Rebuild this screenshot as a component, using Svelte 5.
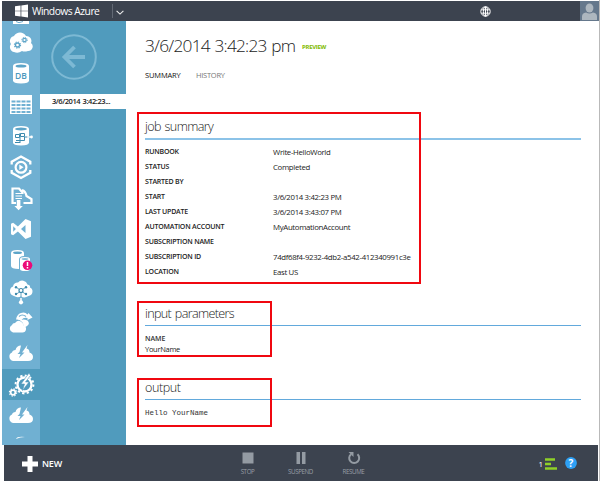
<script>
  const summary = [
    ['RUNBOOK', 'Write-HelloWorld'],
    ['STATUS', 'Completed'],
    ['STARTED BY', ''],
    ['START', '3/6/2014 3:42:23 PM'],
    ['LAST UPDATE', '3/6/2014 3:43:07 PM'],
    ['AUTOMATION ACCOUNT', 'MyAutomationAccount'],
    ['SUBSCRIPTION NAME', ''],
    ['SUBSCRIPTION ID', '74df68f4-9232-4db2-a542-412340991c3e'],
    ['LOCATION', 'East US']
  ];
  const services = ['web', 'cloud', 'db', 'table', 'sync', 'media', 'import', 'vs', 'cache', 'network', 'traffic', 'bolt', 'automation', 'bolt', 'more'];
</script>

<div class="window">
  <header>
    <svg class="logo" viewBox="0 0 14 14"><path d="M0 2l6-.8v5.4H0zM6.8 1.1L14 0v6.6H6.8zM0 7.4h6v5.4L0 12zM6.8 7.4H14V14l-7.2-1.1z" fill="#fff" /></svg>
    <span class="brand">Windows Azure</span>
    <span class="divider"></span>
    <svg class="chev" viewBox="0 0 8 5"><path d="M.6.8L4 4.1 7.4.8" fill="none" stroke="#eee" stroke-width="1.1" /></svg>
    <span class="grow"></span>
    <svg class="globe" viewBox="0 0 11 11"><g fill="none" stroke="#fff" stroke-width="1"><circle cx="5.5" cy="5.5" r="4.7" /><ellipse cx="5.5" cy="5.5" rx="2.1" ry="4.7" /><path d="M5.5.8v9.4M1.3 3.8h8.4M1.3 7.2h8.4" /></g></svg>
    <svg class="avatar" viewBox="0 0 19 20"><path fill="#65788c" d="M0 0h19v20H0z" /><ellipse cx="9.5" cy="7" rx="3.9" ry="4.5" fill="#adb7bf" /><path d="M2 19v-3.5q0-3.5 4-4 3.5 2 7 0 4 .5 4 4V19z" fill="#adb7bf" /></svg>
  </header>

  <div class="body">
    <nav class="rail">
      {#each services as s}
        <div class="item" class:selected={s === 'automation'}>
          <svg viewBox="0 0 38 31">
            {#if s === 'web'}
              <path d="M11 20h16v7H11z" fill="#fff" /><path d="M14 24.5l3 1.2 4-1.2" stroke="#70b0d2" fill="none" />
            {:else if s === 'cloud'}
              <path d="M12 24a5 5 0 0 1-3-8 5 5 0 0 1 3-8 7 7 0 0 1 12 0 5 5 0 0 1 5 7 4.5 4.5 0 0 1-3 8q-4 1-6 0-4 3-8 1z" fill="#fff" />
              <g fill="none" stroke="#5ca4c8"><circle cx="15.500" cy="17" r="2" stroke-width="1.300" /><circle cx="15.500" cy="17" r="3.100" stroke-width="1.100" stroke-dasharray="1.220 1.220" /><circle cx="22.500" cy="12" r="1.700" stroke-width="1.200" /><circle cx="22.500" cy="12" r="2.700" stroke-width="1" stroke-dasharray="1.060 1.060" /></g>
            {:else if s === 'db'}
              <path d="M11 7q0-3 8-3t8 3v14.500q0 3-8 3t-8-3z" fill="#fff" /><ellipse cx="19" cy="7" rx="5.500" ry="1.600" fill="#5ca4c8" />
              <text x="19" y="19.800" text-anchor="middle" font-family="Open Sans, sans-serif" font-size="8.500" font-weight="600" fill="#4b98bd">DB</text>
            {:else if s === 'table'}
              <path d="M8 5h22v19H8z" fill="#fff" />
              <g stroke="#70b0d2" stroke-width="2"><path d="M9.500 11.500h19M9.500 15h19M9.500 18.500h19M9.500 22h19" stroke-dasharray="4 1" /></g>
            {:else if s === 'sync'}
              <path d="M11 8q0-3 8-3t8 3v13.500q0 3-8 3t-8-3z" fill="#fff" /><ellipse cx="19" cy="8" rx="6" ry="1.500" fill="#5ca4c8" />
              <path d="M13.500 13.500h4v3h-4zM18.500 12.500h4v3h-4zM14 19.500h8.500V16M18 12v10M13 21.500h5M22.500 16h4" fill="none" stroke="#3e8bae" /><path d="M25 16h4" stroke="#fff" stroke-width="1.200" /><circle cx="29.500" cy="16" r="1.400" fill="#fff" />
            {:else if s === 'media'}
              <path d="M9.700 12.500V9.700L19 4.500l9.300 5.200v2.800M9.700 18v2.800L19 26l9.300-5.200V18" fill="none" stroke="#fff" stroke-width="2.300" />
              <circle cx="19" cy="15.300" r="5.400" fill="none" stroke="#fff" stroke-width="2.200" /><path d="M17.300 12.500l4.300 2.800-4.300 2.800z" fill="#fff" />
            {:else if s === 'import'}
              <path d="M14 20h-3.500V5.500H17l3.500 4V11" fill="none" stroke="#fff" stroke-width="2.200" /><path d="M20 7q3.500 1 4.500 6l5 3v4h-8" fill="none" stroke="#fff" stroke-width="2.200" />
              <path d="M13.500 10.500h6.500M13.500 13h6.500M13.500 15.500h6.500" stroke="#fff" stroke-width="1.200" /><path d="M14.800 17h3.600v6h2.400l-4.200 4.200-4.200-4.200h2.400z" fill="#fff" />
            {:else if s === 'vs'}
              <path fill="#fff" fill-rule="evenodd" d="M23.500 5L29 7.300v15.400L23.500 25l-7.600-7.400-4.800 3.700L9 20.200V9.800l2.100-1.100 4.800 3.700zM23.500 11L19 15l4.500 4zM11.200 12.300v5.400l2.700-2.700z" />
            {:else if s === 'cache'}
              <path d="M9 8q0-3 6.500-3T22 8v3q-5 0-5 3.500V24q-8 0-8-3z" fill="#fff" /><ellipse cx="15.500" cy="7.800" rx="4.500" ry="1.200" fill="#5ca4c8" />
              <path d="M18 14q0-2 5-2t5 2v10q0 2-5 2t-5-2z" fill="#fff" /><ellipse cx="23" cy="14" rx="3.500" ry=".8" fill="#5ca4c8" />
              <circle cx="25.500" cy="20.300" r="4.800" fill="#ec0b78" /><path d="M25.500 17v4M25.500 22v1.500" stroke="#fff" stroke-width="1.500" />
            {:else if s === 'network'}
              <path d="M12 20a5 5 0 0 1-1-9.500 4.500 4.500 0 0 1 5-4 5.500 5.500 0 0 1 9.500 2q3 .5 2.500 3a4.500 4.500 0 0 1-1.500 8.500q-4 2.500-7.500.5-4 1.500-7-.5z" fill="#fff" />
              <path d="M19 22v5" stroke="#fff" stroke-width="1.500" /><circle cx="19" cy="26.300" r="2.100" fill="#fff" />
              <g stroke="#3e8bae" fill="#3e8bae"><circle cx="19" cy="14.500" r="2" fill="#fff" stroke-width="1.200" /><path stroke-width=".8" d="M14.500 11.500l3 2M23.500 11.500l-3 2M14.500 18l3-2M23.500 18l-3-2M19 16.500V21" /><g stroke="none"><circle cx="14" cy="11.300" r="1.200" /><circle cx="24" cy="11.300" r="1.200" /><circle cx="14" cy="18" r="1.200" /><circle cx="24" cy="18" r="1.200" /></g></g>
            {:else if s === 'traffic'}
              <path d="M20 22a5 5 0 0 0 0-7q-2-3-6-2.500Q15 7 19 6q4-1.500 6.500 1.500l1-1.500 4 4.500-5 2.500v-2q-4-1-6 2 2-1 6 .5 3 3-.5 5.500z" fill="#fff" />
              <path d="M11 25.500a4 4 0 0 1-1-7.500q.5-2 3-2 4-4.500 8 .5 1 1 .5 2 3 1 2.500 4t-3.500 3z" fill="#fff" />
              <path d="M17 9.500q3-3 7 0" stroke="#70b0d2" stroke-width="1.200" fill="none" />
            {:else if s === 'bolt'}
              <path d="M11 23a4.500 4.500 0 0 1-1-8.500q.5-2.500 3.500-2.500 1-4.500 5.500-4.500L17.500 14l-2 2h3L17 20l5.500-5.500H20L25.500 7l-1 3.500q3 .5 3 4 3.500 1 3.500 4.500 0 4-5 4z" fill="#fff" />
            {:else if s === 'automation'}
              <circle cx="22.500" cy="15.500" r="7" fill="none" stroke="#fff" stroke-width="2.300" /><circle cx="22.500" cy="15.500" r="8.900" fill="none" stroke="#fff" stroke-width="2" stroke-dasharray="2.300 2.360" />
              <path d="M27 4l-8 11h3.500l-2 6.500 6.500-8.500h-3.500L28.500 6.500z" fill="#fff" stroke="#509bbd" stroke-width=".6" />
              <circle cx="11" cy="23.500" r="2.300" fill="none" stroke="#fff" stroke-width="1.700" /><circle cx="11" cy="23.500" r="3.600" fill="none" stroke="#fff" stroke-width="1.200" stroke-dasharray="1.400 1.430" />
            {:else}
              <path d="M14 8q1-3 9-2-5 .2-9 2z" fill="#fff" />
            {/if}
          </svg>
        </div>
      {/each}
    </nav>

    <aside>
      <svg class="back" viewBox="0 0 46 46"><g fill="none" stroke="#7db9d4"><circle cx="23" cy="23" r="21.800" stroke-width="2" /><path d="M34 23H15M23.500 13L13.500 23l10 10" stroke-width="3.800" /></g></svg>
      <div class="job">3/6/2014 3:42:23...</div>
    </aside>

    <main>
      <div class="title"><h1>3/6/2014 3:42:23 pm</h1><span class="preview">PREVIEW</span></div>
      <div class="tabs"><span class="on">SUMMARY</span><span class="off">HISTORY</span></div>
      <section class="s1">
        <i class="mark"></i>
        <h2>job summary</h2>
        {#each summary as [label, value]}
          <div class="row"><span class="label">{label}</span><span class="value">{value}</span></div>
        {/each}
      </section>
      <section class="s2">
        <i class="mark"></i>
        <h2>input parameters</h2>
        <div class="pname">NAME</div>
        <div class="pvalue">YourName</div>
      </section>
      <section class="s3">
        <i class="mark"></i>
        <h2>output</h2>
        <pre>Hello YourName</pre>
      </section>
    </main>
  </div>

  <footer>
    <div class="new"><svg viewBox="0 0 16 16"><path d="M5.500 0h5v5.500H16v5h-5.500V16h-5v-5.500H0v-5h5.500z" fill="#fff" /></svg><span>NEW</span></div>
    <div class="commands">
      <div class="cmd"><svg viewBox="0 0 14 14"><path d="M1.500 1.500h11v11h-11z" fill="#949ba3" /></svg><span>STOP</span></div>
      <div class="cmd"><svg viewBox="0 0 14 14"><path d="M2.500 1h3.500v12H2.500zM8 1h3.500v12H8z" fill="#949ba3" /></svg><span>SUSPEND</span></div>
      <div class="cmd"><svg viewBox="0 0 14 14"><path d="M10.500 3.300A5 5 0 1 1 4 3.200" fill="none" stroke="#949ba3" stroke-width="2" /><path d="M1.500 1h5v5z" fill="#949ba3" /></svg><span>RESUME</span></div>
    </div>
    <div class="status"><span>1</span>
      <svg class="bars" viewBox="0 0 12 12"><path d="M0 .2h10v2.600H0zM0 4.700h6v2.600H0zM0 9.200h12v2.600H0z" fill="#8fd128" /></svg>
      <svg class="help" viewBox="0 0 12 12"><circle cx="6" cy="6" r="5.900" fill="#2ea0f4" /><text x="6" y="9.700" text-anchor="middle" font-family="Open Sans, sans-serif" font-weight="700" font-size="10" fill="#fff">?</text></svg>
    </div>
  </footer>
</div>

<style>
  :global(body) { background: #fff; }
  .window { box-sizing: border-box; width: 600px; height: 481px; padding-top: 1px; border-right: 1px solid #b9b9b9; font-family: "Open Sans", "Noto Sans", sans-serif; color: #333; display: flex; flex-direction: column; overflow: hidden; }
  svg { display: block; flex: none; }
  span, h1, h2, pre, .job { white-space: nowrap; }
  header { height: 20px; margin-left: 2px; background: #3c434f; display: flex; align-items: center; flex: none; }
  .logo { width: 13px; height: 14px; margin-left: 13px; }
  .brand { color: #fff; font-size: 10.300px; margin-left: 4px; width: 80px; letter-spacing: -.52px; line-height: 20px; }
  .divider { width: 1px; height: 14px; background: #626974; margin-right: 3px; }
  .chev { width: 8px; height: 5px; margin-top: 3px; }
  .grow { flex: 1; }
  .globe { width: 11px; height: 11px; margin-right: 89px; }
  .avatar { width: 19px; height: 20px; }
  .body { display: flex; height: 424px; flex: none; margin-left: 2px; }
  .rail { width: 38px; background: #70b0d2; overflow: hidden; flex: none; }
  .item { height: 31px; }
  .item:first-child { margin-top: -24px; }
  .item svg { width: 38px; height: 31px; }
  .selected { background: #509bbd; }
  aside { width: 86px; background: #509bbd; flex: none; overflow: hidden; }
  .back { width: 46px; height: 46px; margin: 13px 0 0 11px; }
  .job { margin-top: 14px; height: 15px; background: #fff; line-height: 15px; padding-left: 12px; font-size: 7.500px; font-weight: 600; letter-spacing: -.42px; word-spacing: .8px; color: #222; }
  main { padding-left: 19px; width: 436px; display: flex; flex-direction: column; }
  .title { display: flex; height: 36px; margin-top: 7px; align-items: center; }
  h1 { margin: 0; font-weight: 300; font-size: 17.300px; line-height: 36px; letter-spacing: -.75px; word-spacing: .7px; width: 157px; color: #222; }
  .preview { color: #7fba00; font-size: 6px; font-weight: 700; letter-spacing: -.3px; margin-top: 1px; }
  .tabs { display: flex; height: 12px; margin-top: 5px; font-size: 7.500px; line-height: 12px; letter-spacing: -.15px; }
  .on { width: 51px; color: #111; font-weight: 400; }
  .off { color: #777; letter-spacing: -.25px; }
  section { position: relative; }
  .mark { position: absolute; left: -8px; border: 2px solid #f00810; box-sizing: border-box; }
  h2 { box-sizing: border-box; margin: 0; height: 27px; border-bottom: 1px solid #62a9dc; font-size: 12.600px; line-height: 30px; font-weight: 300; color: #222; letter-spacing: -.65px; word-spacing: 1px; }
  .s1 { height: 186px; margin-top: 32px; }
  .s1 h2 { border-bottom: 2px solid #8cc3e8; margin-bottom: 4px; line-height: 28px; letter-spacing: -.6px; }
  .s1 .mark { top: -1px; width: 284px; height: 172px; }
  .row { display: flex; height: 14.950px; line-height: 15px; font-size: 7.500px; color: #222; }
  .label { width: 128px; font-weight: 600; font-size: 7px; letter-spacing: -.2px; }
  .value { padding-top: 1px; font-size: 7.800px; letter-spacing: -.32px; }
  .s2 { height: 74px; }
  .s2 .mark { top: 2px; width: 135px; height: 56px; }
  .pname { font-size: 7px; font-weight: 600; line-height: 10px; margin-top: 8px; }
  .pvalue { font-size: 7.500px; line-height: 10px; letter-spacing: -.3px; color: #222; }
  .s3 .mark { top: 5px; width: 135px; height: 49px; }
  .s3 h2 { letter-spacing: -.45px; }
  pre { margin: 8px 0 0; font-family: "Liberation Mono", monospace; font-size: 7.500px; line-height: 10px; }
  footer { height: 36px; margin-left: 4px; margin-right: 1px; background: #3c434f; display: flex; align-items: center; color: #fff; flex: none; }
  .new { display: flex; align-items: center; gap: 4px; margin: 1px 0 0 18px; width: 199px; font-size: 9px; font-weight: 600; letter-spacing: -.2px; }
  .new svg { width: 16px; height: 16px; }
  .commands { display: flex; margin-top: 2px; }
  .cmd { width: 53px; display: flex; flex-direction: column; align-items: center; font-size: 6.200px; line-height: 10px; color: #989fa6; letter-spacing: -.4px; gap: 2px; }
  .cmd svg { width: 14px; height: 14px; }
  .status { display: flex; align-items: center; margin-left: auto; margin-right: 21px; font-size: 8px; }
  .bars { width: 12px; height: 12px; margin: 2px 8px 0 2px; }
  .help { width: 12px; height: 12px; }
</style>
